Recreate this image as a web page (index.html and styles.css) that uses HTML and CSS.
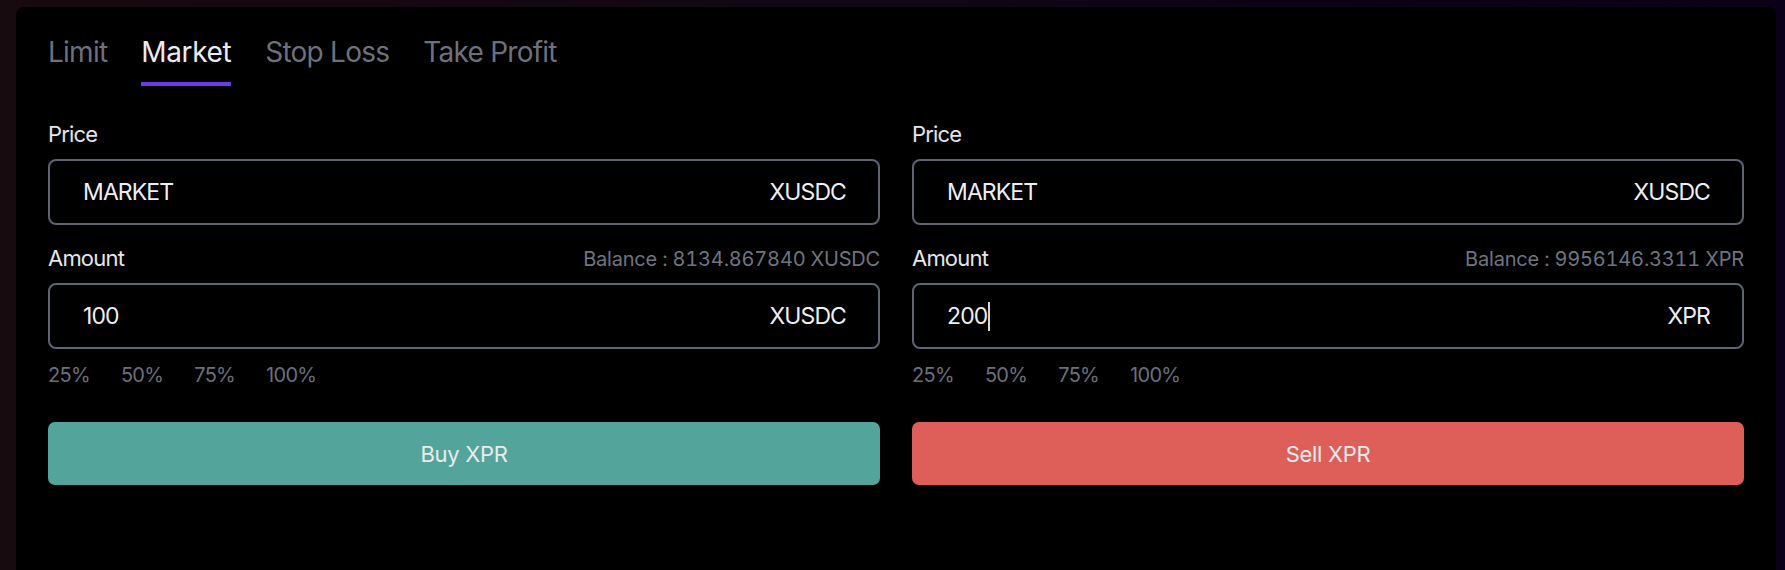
FILE: index.html
```html
<!DOCTYPE html>
<html lang="en">
<head>
<meta charset="utf-8">
<title>Market order</title>
<link rel="stylesheet" href="styles.css">
</head>
<body>
<div class="page">
  <div class="panel">
    <nav class="tabs">
      <div class="tab">Limit</div>
      <div class="tab active">Market</div>
      <div class="tab">Stop Loss</div>
      <div class="tab">Take Profit</div>
    </nav>
    <div class="forms">
      <section class="form">
        <div class="field">
          <div class="field-head"><span class="label">Price</span></div>
          <div class="input"><span class="value">MARKET</span><span class="unit">XUSDC</span></div>
        </div>
        <div class="field">
          <div class="field-head"><span class="label">Amount</span><span class="balance">Balance : 8134.867840 XUSDC</span></div>
          <div class="input"><span class="value">100</span><span class="unit">XUSDC</span></div>
        </div>
        <div class="pcts"><span>25%</span><span>50%</span><span>75%</span><span>100%</span></div>
        <div class="btn buy">Buy XPR</div>
      </section>
      <section class="form">
        <div class="field">
          <div class="field-head"><span class="label">Price</span></div>
          <div class="input"><span class="value">MARKET</span><span class="unit">XUSDC</span></div>
        </div>
        <div class="field">
          <div class="field-head"><span class="label">Amount</span><span class="balance">Balance : 9956146.3311 XPR</span></div>
          <div class="input"><span class="value">200<span class="caret"></span></span><span class="unit">XPR</span></div>
        </div>
        <div class="pcts"><span>25%</span><span>50%</span><span>75%</span><span>100%</span></div>
        <div class="btn sell">Sell XPR</div>
      </section>
    </div>
  </div>
</div>
</body>
</html>
```
FILE: styles.css
```css
* { box-sizing: border-box; }
html, body { margin: 0; height: 100%; }
body {
  font-family: Inter, "Noto Sans", sans-serif;
  background: linear-gradient(90deg, #170b0f 0%, #100614 50%, #0a0019 100%);
  overflow: hidden;
}
.page {
  padding: 7px 9px 0 16px;
  min-height: 100vh;
}
.panel {
  background: #000;
  border-radius: 8px 8px 0 0;
  padding: 28px 32px 0 32px;
  min-height: 563px;
}
.tabs {
  display: flex;
  gap: 34px;
}
.tab {
  font-size: 28px;
  line-height: 34px;
  letter-spacing: -0.75px;
  color: #6d717d;
  padding-bottom: 13px;
  border-bottom: 4px solid transparent;
}
.tab.active {
  color: #ececf0;
  border-bottom-color: #6a3be4;
  letter-spacing: -0.4px;
}
.forms {
  display: grid;
  grid-template-columns: 1fr 1fr;
  gap: 32px;
  margin-top: 35px;
}
.form {
  display: flex;
  flex-direction: column;
}
.field + .field { margin-top: 20px; }
.field-head {
  display: flex;
  justify-content: space-between;
  align-items: baseline;
  height: 26px;
  line-height: 26px;
}
.label {
  font-size: 22px;
  letter-spacing: -0.8px;
  color: #e6e6ea;
}
.balance {
  font-size: 20px;
  letter-spacing: -0.2px;
  color: #6f7480;
  font-variant-numeric: tabular-nums;
}
.input {
  margin-top: 12px;
  height: 66px;
  border: 2px solid #5f6471;
  border-radius: 8px;
  padding: 0 32px 0 33px;
  display: flex;
  align-items: center;
  justify-content: space-between;
  font-size: 23px;
  letter-spacing: -0.9px;
  color: #eeeef2;
}
.value {
  display: inline-flex;
  align-items: center;
}
.caret {
  display: inline-block;
  width: 2px;
  height: 29px;
  margin-left: 1px;
  background: #d8d8dc;
}
.pcts {
  margin-top: 14px;
  display: flex;
  gap: 31px;
  font-size: 20px;
  line-height: 24px;
  letter-spacing: -0.7px;
  color: #6a6f7b;
}
.btn {
  margin-top: 35px;
  height: 63px;
  border-radius: 7px;
  display: flex;
  align-items: center;
  justify-content: center;
  font-size: 22px;
  letter-spacing: -0.3px;
  color: #e8ecec;
}
.btn.buy { background: #53a59b; }
.btn.sell { background: #de5f59; }
```
